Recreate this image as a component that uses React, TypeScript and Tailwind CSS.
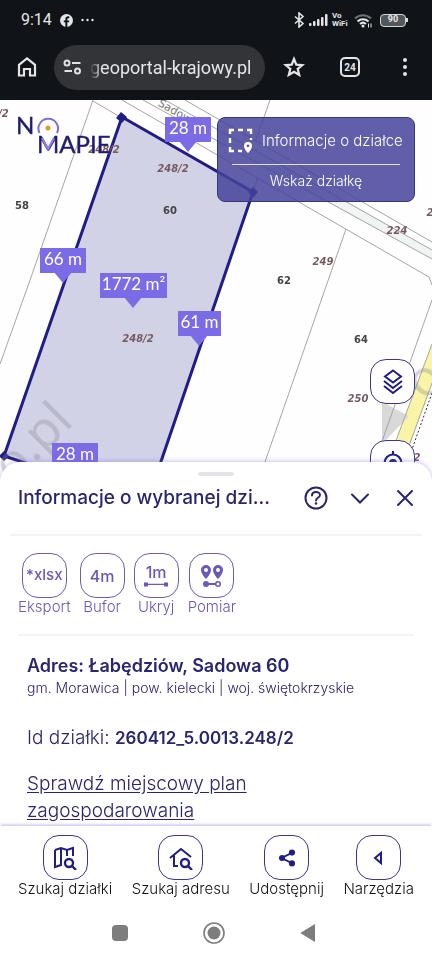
import React from "react";

const flags = [
  { id: 1, label: "28 m", x: 165, y: 117, width: 46, tip: 188 },
  { id: 2, label: "66 m", x: 40, y: 248, width: 46, tip: 63 },
  { id: 3, label: "1772 m²", x: 100, y: 273, width: 67, tip: 133 },
  { id: 4, label: "61 m", x: 178, y: 311, width: 43, tip: 199 },
  { id: 5, label: "28 m", x: 52, y: 443, width: 46, tip: 75 },
];

const houseNumbers = [
  { label: "58", x: 22, y: 209 },
  { label: "60", x: 170, y: 214 },
  { label: "62", x: 284, y: 284 },
  { label: "64", x: 361, y: 343 },
];

const parcelNumbers = [
  { label: "248/2", x: -7, y: 117 },
  { label: "248/2", x: 104, y: 153 },
  { label: "248/2", x: 173, y: 172 },
  { label: "248/2", x: 138, y: 342 },
  { label: "224", x: 397, y: 234 },
  { label: "249", x: 323, y: 265 },
  { label: "250", x: 358, y: 402 },
  { label: "251", x: 437, y: 216 },
  { label: "2", x: 417, y: 461 },
];

const tile =
  "flex h-[45px] w-[45px] items-center justify-center rounded-2xl border bg-white";

const StatusBar: React.FC = () => (
  <div className="flex h-10 items-center justify-between pl-[21px] pr-6">
    <div className="flex items-center gap-2">
      <span className="font-[Roboto,sans-serif] text-base">9:14</span>
      <svg className="h-[13px] w-[13px]" viewBox="0 0 24 24">
        <circle cx="12" cy="12" r="12" fill="#e4e6e9" />
        <path
          d="M13.5 24v-8.6h3l.6-3.6h-3.6V9.6c0-1.2.6-1.9 2-1.9h1.7V4.500c-3.800-.8-7.300.5-7.300 4.700v2.600H7v3.600h2.900V24z"
          fill="#101317"
        />
      </svg>
      <svg className="h-1 w-[13px]" viewBox="0 0 13 4" fill="#e4e6e9">
        <circle cx="1.500" cy="2" r="1.200" />
        <circle cx="6.500" cy="2" r="1.200" />
        <circle cx="11.500" cy="2" r="1.200" />
      </svg>
    </div>
    <div className="flex items-center gap-1">
      <svg
        className="h-4 w-3"
        viewBox="0 0 12 16"
        fill="none"
        stroke="#e4e6e9"
        strokeWidth="1.600"
      >
        <path d="M2 4.500l8 7-4 3.500V1l4 3.500-8 7" />
      </svg>
      <svg className="h-3 w-[19px]" viewBox="0 0 19 12" fill="#e4e6e9">
        <rect x="0" y="9" width="2.500" height="3" rx="1" />
        <rect x="4" y="7" width="2.500" height="5" rx="1" />
        <rect x="8" y="5" width="2.500" height="7" rx="1" />
        <rect x="12" y="3" width="2.500" height="9" rx="1" />
        <rect x="16" y="0" width="2.500" height="12" rx="1" />
      </svg>
      <span className="w-[18px] font-[Roboto,sans-serif] text-[8px] font-bold leading-[8px]">
        Vo
        <br />
        WiFi
      </span>
      <svg className="h-[15px] w-[18px]" viewBox="0 0 18 15" fill="none" strokeWidth="2">
        <path d="M1 5.500a11.500 11.500 0 0 1 16 0" stroke="#6d7074" />
        <path d="M3.500 8.500a8 8 0 0 1 11 0" stroke="#e4e6e9" />
        <path d="M6 11a4.500 4.500 0 0 1 6 0" stroke="#e4e6e9" />
        <circle cx="9" cy="13" r="1.500" fill="#e4e6e9" />
        <path d="M14.500 10.500v4M17 10.500v4" stroke="#e4e6e9" strokeWidth="1" />
      </svg>
      <div className="ml-1 flex items-center">
        <span className="flex h-[13px] w-[26px] items-center justify-center rounded border border-[#d5d7da] bg-[#54575a] font-[Roboto,sans-serif] text-[9px] font-bold">
          90
        </span>
        <span className="h-1 w-0.5 bg-[#d5d7da]" />
      </div>
    </div>
  </div>
);

const BrowserBar: React.FC = () => (
  <div className="flex h-[60px] items-center px-[17px] pb-2.5 pt-1">
    <button aria-label="Strona główna" className="shrink-0">
      <svg className="h-5 w-5" viewBox="0 0 20 20" fill="none" stroke="#e4e6e9" strokeWidth="2.200">
        <path d="M2 7.800L10 1.500l8 6.300V18.500h-5V12H7v6.500H2z" />
      </svg>
    </button>
    <div className="ml-[17px] flex h-[45px] min-w-0 flex-1 items-center gap-2 rounded-full bg-[#323438] pl-[9px] pr-1">
      <svg className="h-4 w-[19px] shrink-0" viewBox="0 0 19 16" fill="none" stroke="#dfe1e5" strokeWidth="2">
        <circle cx="4" cy="4" r="2.500" />
        <path d="M9 4h8.500M1.500 12H9" />
        <circle cx="14.500" cy="12" r="2.500" />
      </svg>
      <label htmlFor="address" className="sr-only">
        Adres strony
      </label>
      <input
        id="address"
        readOnly
        value="geoportal-krajowy.pl"
        className="w-full min-w-0 bg-transparent font-[Roboto,sans-serif] text-[18px] text-[#e4e6e9] outline-none [mask-image:linear-gradient(to_right,transparent,black_12px)]"
      />
    </div>
    <button aria-label="Dodaj do ulubionych" className="ml-[18px] shrink-0">
      <svg className="h-[22px] w-[22px]" viewBox="0 0 22 22" fill="none" stroke="#e4e6e9" strokeWidth="2.200">
        <path d="M11 3l2.300 5.600 6 .5-4.600 3.900 1.500 5.900L11 15.700l-5.200 3.200 1.500-5.900L2.700 9.100l6-.5z" />
      </svg>
    </button>
    <button
      aria-label="Karty: 24"
      className="ml-[35px] flex h-5 w-5 shrink-0 items-center justify-center rounded-[5px] border-2 border-[#e4e6e9] font-[Roboto,sans-serif] text-[10px] font-bold"
    >
      24
    </button>
    <button aria-label="Menu" className="ml-[35px] flex w-5 shrink-0 justify-center">
      <svg className="h-[18px] w-1" viewBox="0 0 4 18" fill="#e4e6e9">
        <circle cx="2" cy="2" r="2" />
        <circle cx="2" cy="9" r="2" />
        <circle cx="2" cy="16" r="2" />
      </svg>
    </button>
  </div>
);

const ParcelMap: React.FC = () => (
  <svg
    className="block h-full w-full"
    viewBox="0 100 432 382"
    preserveAspectRatio="xMidYMin slice"
  >
    <rect y="100" width="432" height="382" fill="#fefefe" />
    <path d="M216 126L432 250v9L216 143z" fill="#f0f5f4" />
    <path d="M432 344L388 462h15l29-77z" fill="#faf5a6" />
    <path d="M382 402l27 14-27 28z" fill="#d9d9d9" />
    <g fill="none" stroke="#a5a5a5" strokeWidth="1">
      <path d="M93 100L29 283 0 364M93 101l29 17" />
      <path d="M122 100l307 177 3 8M143 100l289 159M165 100l267 150M185 100l247 142" />
      <path d="M270 100l-14 40M258 177l-5 15M346 229l-88 253M432 300l-58 164" />
      <path d="M432 344l-44 118M432 383l-29 79" />
    </g>
    <path d="M432 393l-28 79" stroke="#333" strokeDasharray="2 2" />
    <text
      transform="translate(176 116) rotate(30)"
      textAnchor="middle"
      className="fill-[#777] font-['DejaVu_Sans',sans-serif] text-[11px]"
    >
      Sadowa
    </text>

    <path
      d="M122 117L253 192 154 482H84L4 456z"
      fill="#4645a0"
      fillOpacity="0.24"
      stroke="#211d86"
      strokeWidth="3"
    />
    <g fill="#211d86">
      <path d="M121 112l6 5-5 6-6-5zM253 187l5 5-5 6-5-6zM4 451l5 5-5 5-5-5z" />
    </g>

    <g className="fill-[#8b8b93] font-['Noto_Sans',sans-serif] text-[50px]" opacity="0.35">
      <text transform="translate(13 485) rotate(-45)">o.pl</text>
      <text transform="translate(425 402) rotate(-45)">o</text>
    </g>

    <g
      textAnchor="middle"
      className="fill-[#444] font-['DejaVu_Sans',sans-serif] text-[10px] font-bold"
    >
      {houseNumbers.map((item) => (
        <text key={item.label} x={item.x} y={item.y}>
          {item.label}
        </text>
      ))}
    </g>
    <g
      textAnchor="middle"
      className="fill-[#765a5e] font-['DejaVu_Sans',sans-serif] text-[10px] font-bold italic"
    >
      {parcelNumbers.map((item) => (
        <text key={`${item.x}-${item.y}`} x={item.x} y={item.y}>
          {item.label}
        </text>
      ))}
    </g>

    <g textAnchor="middle" className="font-[Lato,sans-serif] text-[17px]">
      {flags.map((flag) => (
        <g key={flag.id}>
          <rect x={flag.x} y={flag.y} width={flag.width} height="25" fill="#7b6be6" />
          <path
            d={`M${flag.tip - 9} ${flag.y + 24}h18l-9 11z`}
            fill="#7b6be6"
          />
          <text x={flag.x + flag.width / 2} y={flag.y + 17} fill="#fff">
            {flag.label}
          </text>
        </g>
      ))}
    </g>

    <g
      className="font-[Lato,sans-serif] text-[24px]"
      fill="#211d6e"
      stroke="#211d6e"
      strokeWidth="0.4"
    >
      <text x="16" y="134">
        N
      </text>
      <text x="37" y="153">
        MAPIE
      </text>
      <path d="M42 138l6 11 6-11" fill="none" stroke="#8d80ee" strokeWidth="2.200" />
      <path d="M39.500 133a9.800 9.800 0 1 1 17.500 0" fill="none" stroke="#7d70de" strokeWidth="2" />
      <circle cx="48" cy="128" r="2.500" fill="#e89a1c" stroke="none" />
    </g>
  </svg>
);

const InfoCard: React.FC = () => (
  <div className="absolute right-[17px] top-[17px] flex h-[85px] w-[198px] flex-col items-center rounded-lg border border-[#38367f] bg-[#45439a]/85 text-sm text-white">
    <div className="flex h-[46px] w-full items-center gap-2 pl-2.5">
      <svg className="h-[26px] w-[26px] shrink-0" viewBox="0 0 26 26" fill="none" stroke="#fff" strokeWidth="2.400">
        <path d="M2 6V2h4M10 2h5M19 2h4v4M23 10v2M2 10v5M2 19v4h4M10 23h4" />
        <path
          d="M20 25s-4-3.500-4-7a4 4 0 0 1 8 0c0 3.500-4 7-4 7zm0-5.800a1.400 1.400 0 1 0 0-2.800 1.400 1.400 0 0 0 0 2.800z"
          fill="#fff"
          fillRule="evenodd"
          stroke="none"
        />
      </svg>
      <span className="whitespace-nowrap text-[15px] font-light">
        Informacje o działce
      </span>
    </div>
    <div className="h-px w-[168px] bg-white/80" />
    <button className="flex-1 pb-1 font-light">Wskaż działkę</button>
  </div>
);

const tools = [
  {
    id: "export",
    label: "Eksport",
    icon: <span className="text-[15px] font-medium">*xlsx</span>,
  },
  { id: "buffer", label: "Bufor", icon: <span className="font-medium">4m</span> },
  {
    id: "hide",
    label: "Ukryj",
    icon: (
      <span className="flex flex-col items-center gap-0.5">
        <span className="font-medium leading-4">1m</span>
        <svg className="h-[5px] w-6" viewBox="0 0 24 5" fill="currentColor">
          <path d="M0 0.500h4v1.200h16V0.500h4v4h-4V3H4v1.500H0z" />
        </svg>
      </span>
    ),
  },
  {
    id: "measure",
    label: "Pomiar",
    icon: (
      <svg className="h-6 w-6" viewBox="0 0 24 24" fill="currentColor">
        <path
          fillRule="evenodd"
          d="M6 15S1 10 1 6a5 5 0 0 1 10 0c0 4-5 9-5 9zm0-7a2 2 0 1 0 0-4 2 2 0 0 0 0 4zM18 15s-5-5-5-9a5 5 0 0 1 10 0c0 4-5 9-5 9zm0-7a2 2 0 1 0 0-4 2 2 0 0 0 0 4z"
        />
        <circle cx="6" cy="20" r="3" />
        <path d="M8 19h8v2H8z" />
        <circle cx="18" cy="20" r="2.300" fill="none" stroke="currentColor" strokeWidth="1.500" />
      </svg>
    ),
  },
];

const navItems = [
  {
    id: "parcel",
    label: "Szukaj działki",
    icon: (
      <svg className="h-6 w-6" viewBox="0 0 24 24" fill="none" stroke="currentColor" strokeWidth="2">
        <path d="M2 4l6-2 6 2 6-2v8M2 4v17l6-2V2M14 4v6" />
        <circle cx="16" cy="17" r="4" strokeWidth="2.400" />
        <path d="M19 20l4 4" strokeWidth="2.400" />
      </svg>
    ),
  },
  {
    id: "address",
    label: "Szukaj adresu",
    icon: (
      <svg className="h-6 w-6" viewBox="0 0 24 24" fill="none" stroke="currentColor" strokeWidth="2">
        <path d="M1 12L12 3l10 8M5 9.500V20h4" />
        <circle cx="16" cy="17" r="4" strokeWidth="2.400" />
        <path d="M19 20l4 4" strokeWidth="2.400" />
      </svg>
    ),
  },
  {
    id: "share",
    label: "Udostępnij",
    icon: (
      <svg className="h-[18px] w-[18px]" viewBox="0 0 20 20" fill="currentColor">
        <path d="M16 4L4 10l12 6" fill="none" stroke="currentColor" strokeWidth="2" />
        <circle cx="15.500" cy="4" r="3.400" />
        <circle cx="4.500" cy="10" r="3.400" />
        <circle cx="15.500" cy="16" r="3.400" />
      </svg>
    ),
  },
  {
    id: "tools",
    label: "Narzędzia",
    icon: (
      <svg className="h-4 w-4" viewBox="0 0 16 16" fill="none" stroke="currentColor" strokeWidth="2">
        <path d="M10 3v10L4 8z" />
      </svg>
    ),
  },
];

const Sheet: React.FC = () => (
  <section className="relative -mt-5 flex-1 rounded-t-[20px] bg-white pt-2.5 text-[#29256f] shadow-[0_-1px_4px_#7b6be666]">
    <div className="mx-auto h-1 w-9 rounded-full bg-[#e2e6ec]" />
    <div className="flex h-[58px] items-center px-[18px] pb-3.5">
      <h1 className="min-w-0 flex-1 truncate text-[19px] font-medium">
        Informacje o wybranej dzi...
      </h1>
      <button aria-label="Pomoc" className="ml-6">
        <svg className="h-6 w-6" viewBox="0 0 24 24" fill="none" stroke="currentColor" strokeWidth="2">
          <circle cx="12" cy="12" r="10.500" />
          <path d="M8 9.500C8 5 16 5 16 9c0 2.700-4 2.800-4 5.500" strokeLinecap="round" />
          <circle cx="12" cy="17.500" r="1.300" fill="currentColor" stroke="none" />
        </svg>
      </button>
      <button aria-label="Zwiń" className="ml-[22px]">
        <svg className="h-5 w-5" viewBox="0 0 20 20" fill="none" stroke="currentColor" strokeWidth="2" strokeLinecap="round">
          <path d="M2 6.500l8 8 8-8" />
        </svg>
      </button>
      <button aria-label="Zamknij" className="ml-[26px]">
        <svg className="h-[18px] w-[18px]" viewBox="0 0 18 18" fill="none" stroke="currentColor" strokeWidth="2" strokeLinecap="round">
          <path d="M2 2l14 14M16 2L2 16" />
        </svg>
      </button>
    </div>
    <div className="mx-2.5 h-0.5 bg-[#f3f3f5]" />
    <div className="flex gap-[9px] px-[18px] pb-[18px] pt-[17px] text-[#6a58bd]">
      {tools.map((tool) => (
        <button key={tool.id} className="flex flex-col items-center text-base">
          <span className={`${tile} border-[#6a5fae]`}>{tool.icon}</span>
          <span className="text-[15px] font-light leading-[18px]">{tool.label}</span>
        </button>
      ))}
    </div>
    <div className="mx-[18px] h-0.5 bg-[#f3f3f5]" />
    <div className="px-[27px] pt-[18px]">
      <h2 className="text-[18px] font-semibold leading-6">
        Adres: Łabędziów, Sadowa 60
      </h2>
      <p className="text-[14px] font-light leading-5">
        gm. Morawica | pow. kielecki | woj. świętokrzyskie
      </p>
      <p className="mt-7 text-[19px] font-light leading-6">
        Id działki:{" "}
        <strong className="text-[17px] font-semibold">260412_5.0013.248/2</strong>
      </p>
      <a
        href="#plan"
        className="mt-5 block w-60 text-[19px] font-light leading-[27px] underline underline-offset-2"
      >
        Sprawdź miejscowy plan zagospodarowania
      </a>
    </div>
  </section>
);

const BottomNav: React.FC = () => (
  <nav className="relative flex justify-between bg-white px-[18px] pb-1 pt-[9px] shadow-[0_-3px_2px_-1px_#7b6be64d]">
    {navItems.map((item) => (
      <button key={item.id} className="flex flex-col items-center">
        <span className={`${tile} border-[#3a368c] text-[#211d86]`}>{item.icon}</span>
        <span className="whitespace-nowrap text-[15px] font-light leading-[18px] text-[#111]">
          {item.label}
        </span>
      </button>
    ))}
  </nav>
);

const SystemBar: React.FC = () => (
  <div className="flex h-[58px] items-center justify-center gap-[75px] bg-white pr-1 pt-1">
    <button aria-label="Ostatnie" className="h-4 w-4 rounded-sm bg-[#7d7d7d]" />
    <button aria-label="Ekran główny">
      <svg className="h-[22px] w-[22px]" viewBox="0 0 22 22">
        <circle cx="11" cy="11" r="10" fill="none" stroke="#7d7d7d" strokeWidth="1.600" />
        <circle cx="11" cy="11" r="6.500" fill="#7d7d7d" />
      </svg>
    </button>
    <button aria-label="Wstecz">
      <svg className="h-[18px] w-4" viewBox="0 0 16 18">
        <path d="M15 0v18L1 9.500v-1z" fill="#7d7d7d" />
      </svg>
    </button>
  </div>
);

const App: React.FC = () => {
  return (
    <div className="flex min-h-screen flex-col bg-white font-[Inter,sans-serif]">
      <header className="bg-[#101317] text-[#e4e6e9]">
        <StatusBar />
        <BrowserBar />
      </header>
      <main className="flex flex-1 flex-col">
        <section className="relative h-[382px] overflow-hidden">
          <ParcelMap />
          <InfoCard />
          <div className="absolute right-[17px] top-[259px] flex flex-col gap-9 text-[#211d86]">
            <button aria-label="Warstwy" className={`${tile} border-[#3a368c]`}>
              <svg className="h-[26px] w-5" viewBox="0 0 20 26" fill="none" stroke="currentColor" strokeWidth="2">
                <path d="M10 1.500l8 6-8 6-8-6zM1 12l9 7 9-7M1 17l9 7 9-7" />
              </svg>
            </button>
            <button aria-label="Moja lokalizacja" className={`${tile} border-[#3a368c]`}>
              <svg className="h-6 w-6" viewBox="0 0 24 24" fill="none" stroke="currentColor" strokeWidth="2.200">
                <circle cx="12" cy="12" r="8.500" />
                <circle cx="12" cy="12" r="4" fill="currentColor" stroke="none" />
                <path d="M12 0v4M12 20v4M0 12h4M20 12h4" />
              </svg>
            </button>
          </div>
        </section>
        <Sheet />
      </main>
      <BottomNav />
      <SystemBar />
    </div>
  );
};

export default App;
